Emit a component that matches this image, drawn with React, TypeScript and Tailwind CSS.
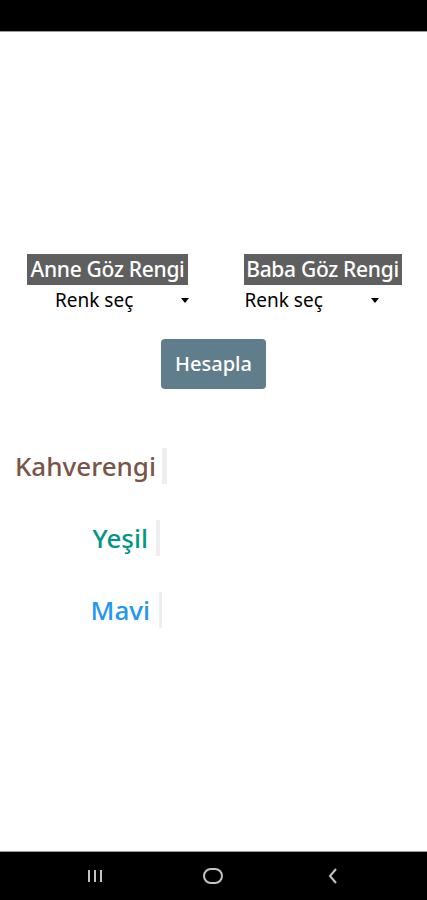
export default function App() {
  return (
    <div className="w-[427px] h-[900px] flex flex-col bg-white font-['Noto_Sans',sans-serif] overflow-hidden">
      {/* status bar */}
      <div className="h-[32px] bg-black border-b border-[#9a9a9a] shrink-0"></div>

      <main className="flex-1 flex flex-col">
        {/* eye colour pickers */}
        <div className="grid grid-cols-2 mt-[222px]">
          <div className="flex flex-col">
            <div className="ml-[27px] w-[161px] h-[31px] bg-[#5f5f5f] text-white text-[21px] font-medium tracking-[-0.3px] leading-[31px] whitespace-nowrap flex justify-center">
              Anne Göz Rengi
            </div>
            <div className="ml-[55px] w-[136px] h-[30px] flex items-center justify-between text-[19px] text-black">
              <span>Renk seç</span>
              <span className="w-0 h-0 border-l-[4px] border-r-[4px] border-t-[5px] border-l-transparent border-r-transparent border-t-black mr-[2px]"></span>
            </div>
          </div>
          <div className="flex flex-col">
            <div className="ml-[30px] w-[158px] h-[31px] bg-[#5f5f5f] text-white text-[21px] font-medium tracking-[-0.3px] leading-[31px] whitespace-nowrap flex justify-center">
              Baba Göz Rengi
            </div>
            <div className="ml-[31px] w-[136px] h-[30px] flex items-center justify-between text-[19px] text-black">
              <span>Renk seç</span>
              <span className="w-0 h-0 border-l-[4px] border-r-[4px] border-t-[5px] border-l-transparent border-r-transparent border-t-black mr-[2px]"></span>
            </div>
          </div>
        </div>

        <button className="mx-auto mt-[24px] w-[105px] h-[50px] rounded-[4px] bg-[#607d8b] text-white text-[20px] font-medium">
          Hesapla
        </button>

        {/* results */}
        <div className="flex flex-col gap-[36px] mt-[59px]">
          <div className="flex items-center h-[36px]">
            <span className="w-[156px] text-right text-[26px] font-medium text-[#795548] whitespace-nowrap">Kahverengi</span>
            <span className="ml-[6px] w-[5px] h-[36px] bg-[#eeeeee]"></span>
          </div>
          <div className="flex items-center h-[36px]">
            <span className="w-[148px] text-right text-[26px] font-medium text-[#009688] whitespace-nowrap">Yeşil</span>
            <span className="ml-[8px] w-[4px] h-[36px] bg-[#eeeeee]"></span>
          </div>
          <div className="flex items-center h-[36px]">
            <span className="w-[150px] text-right text-[26px] font-medium text-[#2196f3] whitespace-nowrap">Mavi</span>
            <span className="ml-[9px] w-[3px] h-[36px] bg-[#eeeeee]"></span>
          </div>
        </div>
      </main>

      {/* navigation bar */}
      <div className="h-[49px] bg-black border-t border-[#9a9a9a] shrink-0 flex items-center">
        <div className="w-[190px] shrink-0 flex justify-center">
          <svg width="16" height="16" viewBox="0 0 16 16" fill="none" stroke="#c4c4c4" strokeWidth="2">
            <path d="M2 2v12M8 2v12M14 2v12" />
          </svg>
        </div>
        <div className="w-[46px] shrink-0 flex justify-center">
          <svg width="22" height="18" viewBox="0 0 22 18" fill="none" stroke="#c4c4c4" strokeWidth="2">
            <rect x="2" y="2" width="18" height="14" rx="7" />
          </svg>
        </div>
        <div className="w-[194px] shrink-0 flex justify-center">
          <svg width="12" height="18" viewBox="0 0 12 18" fill="none" stroke="#c4c4c4" strokeWidth="2">
            <path d="M9 2L3 9l6 7" />
          </svg>
        </div>
      </div>
    </div>
  );
}
